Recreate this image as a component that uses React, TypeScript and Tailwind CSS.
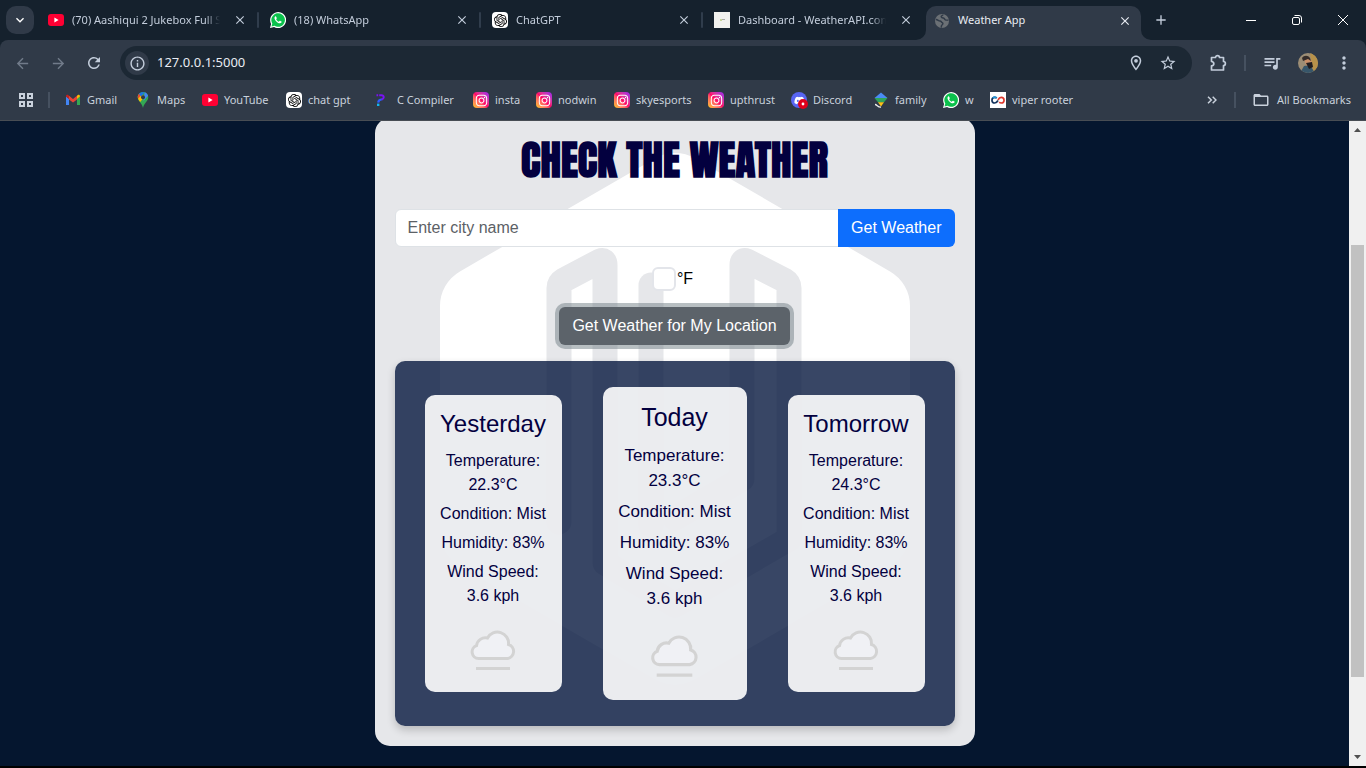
import React from "react";
import { FaInstagram, FaDiscord } from "react-icons/fa";
import { SiOpenai } from "react-icons/si";
import {
  MdArrowBack, MdArrowForward, MdRefresh, MdInfoOutline, MdStarBorder,
  MdMoreVert, MdOutlineLocationOn, MdFolderOpen, MdQueueMusic, MdClose, MdAdd, MdExpandMore,
} from "react-icons/md";

function YouTubeIcon() {
  return (
    <svg viewBox="0 0 16 16" className="size-4 shrink-0" aria-hidden="true">
      <rect y="2" width="16" height="12" rx="3" fill="#ff0033" />
      <path d="M6.4 5.6v4.8L10.6 8z" fill="#fff" />
    </svg>
  );
}

function WhatsAppIcon() {
  return (
    <svg viewBox="0 0 16 16" className="size-4 shrink-0" aria-hidden="true">
      <path d="M0 16l1.1-4.1A8 8 0 1 1 4.1 15z" fill="#fff" />
      <path d="M1.5 14.5l.8-3A6.8 6.8 0 1 1 4.6 13.8z" fill="#0bc14c" />
      <path d="M5.6 4.2c-.3 0-1.1.6-1.1 1.7 0 2.4 3.2 5.4 5.4 5.4 1.1 0 1.8-.9 1.8-1.5 0-.4-1.6-1.1-1.9-1.1s-.7 1-1.1 1c-.5 0-2.5-1.8-2.5-2.3 0-.3.6-.7.6-1.1 0-.4-.7-2.1-1.2-2.1z" fill="#fff" />
    </svg>
  );
}

function ChatIcon() {
  return (
    <span className="grid size-4 shrink-0 place-items-center rounded-sm bg-white text-black">
      <SiOpenai size={13} />
    </span>
  );
}

function DashboardIcon() {
  return (
    <svg viewBox="0 0 16 16" className="size-4 shrink-0" aria-hidden="true">
      <rect width="16" height="16" fill="#f1f1ee" />
      <path d="M6 7h2v2H6z" fill="#c6d39a" />
      <path d="M8 7h3v1H8z" fill="#a9a9a9" />
    </svg>
  );
}

function GlobeIcon() {
  return (
    <svg viewBox="0 0 16 16" className="size-4 shrink-0" aria-hidden="true">
      <circle cx="8" cy="8" r="7" fill="#6b7075" />
      <path d="M2 6.5c2 .2 2.4 1.5 4 1.5 1.3 0 1.2 1.2 2.3 1.6 1 .4.6 1.8-.3 2.4-.8.6-.8 1.8-.4 2.6M9 1.600c-.2 1.200-1.800 1-1.800 2.200 0 1 1.300 1 2.300 1.200 1.200.3.800 1.800 2.200 1.900 1 0 1.500.2 2.700.4" fill="none" stroke="#303a48" strokeWidth="1.5" />
    </svg>
  );
}

function GmailIcon() {
  return (
    <svg viewBox="0 0 16 16" className="size-4 shrink-0" aria-hidden="true">
      <path d="M1 4.5V13h3V6.8z" fill="#4285f4" />
      <path d="M15 4.5V13h-3V6.8z" fill="#34a853" />
      <path d="M12 6.9l3-2.300v-.4c0-1.200-1.300-1.800-2.200-1.100L12 3.700z" fill="#fbbc04" />
      <path d="M4 3.7L8 6.900l4-3.200v3.700L8 10.500 4 7.400z" fill="#ea4335" />
      <path d="M1 4.6L4 6.900V3.700l-.8-.6C2.300 2.400 1 3 1 4.200z" fill="#c5221f" />
    </svg>
  );
}

function MapsIcon() {
  return (
    <svg viewBox="0 0 16 16" className="size-4 shrink-0" aria-hidden="true">
      <path d="M8 0C5 0 2.700 2.300 2.700 5.200c0 4 4 5 5.300 10.800C9.300 10.200 13.300 9.200 13.300 5.200 13.300 2.300 11 0 8 0z" fill="#34a853" />
      <path d="M3 3.5C2.200 6.600 4 8.400 5.200 9.900L9.600 4.500 4.800 1.200z" fill="#fbbc04" />
      <path d="M4 1.8A5.300 5.300 0 0 0 3 6.800l4-4.700z" fill="#ea4335" />
      <path d="M4 1.8C5.500 0 8 0 9.600.3L6 4.700z" fill="#1a73e8" />
      <path d="M9.600.3c2 .6 3 2 3.500 3.500L8.500 9z" fill="#4285f4" />
      <circle cx="8" cy="5.2" r="2" fill="#303a48" />
    </svg>
  );
}

function CompilerIcon() {
  return (
    <svg viewBox="0 0 16 16" className="size-4 shrink-0" fill="none" aria-hidden="true">
      <path d="M1.500 3.200h1.700M4.200 3.200h2.600a1.900 1.900 0 0 1 1.300 3.300L6.600 7.700" stroke="#7a12f5" strokeWidth="2" />
      <path d="M6.800 7.500C4.500 7.600 3.400 8.600 3.200 10.600" stroke="#2f5bff" strokeWidth="2.200" />
      <path d="M2 11.600h2.400V14H2z" fill="#12b5f0" />
    </svg>
  );
}

function InstagramIcon() {
  return (
    <span className="grid size-4 shrink-0 place-items-center rounded-sm bg-linear-to-tr from-[#ffc800] via-[#ff0069] via-50% to-[#9b0cf5] text-white">
      <FaInstagram size={13} />
    </span>
  );
}

function DiscordIcon() {
  return (
    <span className="relative grid size-4 shrink-0 place-items-center rounded-full bg-[#5865f2] text-white">
      <FaDiscord size={11} />
      <svg viewBox="0 0 10 10" className="absolute -right-px -bottom-px size-[10px]" aria-hidden="true">
        <circle cx="5" cy="5" r="5" fill="#e0001b" />
        <circle cx="5" cy="5" r="1.4" fill="#fff" />
      </svg>
    </span>
  );
}

function FamilyIcon() {
  return (
    <svg viewBox="0 0 16 16" className="size-4 shrink-0" aria-hidden="true">
      <path d="M8 .5L14.500 6H1.500z" fill="#4a8af4" />
      <path d="M1.500 6h13L11 10.200H5z" fill="#2fa45a" />
      <path d="M5 10.200h6L8 14.500z" fill="#fbc117" />
      <path d="M2 12.500c2 0 3 3 6 2.500" fill="none" stroke="#eee" strokeWidth="1.3" />
    </svg>
  );
}

function ViperIcon() {
  return (
    <svg viewBox="0 0 16 16" className="size-4 shrink-0" aria-hidden="true">
      <rect width="16" height="16" fill="#fff" />
      <path d="M8 8.500C6.800 10.500 5.800 11 4.800 11a2.800 2.800 0 0 1 0-5.700c.8 0 1.500.3 2 .8" fill="none" stroke="#16365f" strokeWidth="1.7" />
      <path d="M2.800 6a2.800 2.800 0 0 1 3.700-.2" fill="none" stroke="#2196d8" strokeWidth="1.7" />
      <path d="M8 8c1-2 2-2.700 3.200-2.700a2.800 2.800 0 0 1 0 5.700c-.8 0-1.500-.3-2-.8" fill="none" stroke="#e03a2f" strokeWidth="1.7" />
    </svg>
  );
}

function ExtensionIcon() {
  return (
    <svg viewBox="0 0 18 18" className="size-[18px]" fill="none" stroke="currentColor" strokeWidth="1.7" strokeLinejoin="round" aria-hidden="true">
      <path d="M2.500 3.500H6.500C6.500 1 10.500 1 10.500 3.500H14.500V7.500C17 7.500 17 11.500 14.500 11.500V16H2.500V11.900C5.600 11.500 5.600 7.900 2.500 7.500z" />
    </svg>
  );
}

const tabs = [
  { title: "(70) Aashiqui 2 Jukebox Full S", icon: <YouTubeIcon /> },
  { title: "(18) WhatsApp", icon: <WhatsAppIcon /> },
  { title: "ChatGPT", icon: <ChatIcon /> },
  { title: "Dashboard - WeatherAPI.com", icon: <DashboardIcon /> },
];

const bookmarks = [
  { label: "Gmail", icon: <GmailIcon />, width: "w-[70px]" },
  { label: "Maps", icon: <MapsIcon />, width: "w-[67px]" },
  { label: "YouTube", icon: <YouTubeIcon />, width: "w-[84px]" },
  { label: "chat gpt", icon: <ChatIcon />, width: "w-[89px]" },
  { label: "C Compiler", icon: <CompilerIcon />, width: "w-[98px]" },
  { label: "insta", icon: <InstagramIcon />, width: "w-[63px]" },
  { label: "nodwin", icon: <InstagramIcon />, width: "w-[78px]" },
  { label: "skyesports", icon: <InstagramIcon />, width: "w-[94px]" },
  { label: "upthrust", icon: <InstagramIcon />, width: "w-[83px]" },
  { label: "Discord", icon: <DiscordIcon />, width: "w-[82px]" },
  { label: "family", icon: <FamilyIcon />, width: "w-[70px]" },
  { label: "w", icon: <WhatsAppIcon />, width: "w-[47px]" },
  { label: "viper rooter", icon: <ViperIcon />, width: "w-[90px]" },
];

function TabStrip() {
  return (
    <div className="flex h-10 items-center bg-[#15212d] pl-1.5">
      <button aria-label="Search tabs" className="mr-1 grid size-7 shrink-0 place-items-center rounded-[10px] bg-[#303a48] text-white">
        <MdExpandMore size={16} />
      </button>
      {tabs.map((tab, i) => (
        <div key={tab.title} className="flex h-7 w-[222px] min-w-0 items-center pl-2.5 text-[#c3cddb]">
          {tab.icon}
          <span className="ml-2 w-[148px] overflow-hidden mask-r-from-90% whitespace-nowrap">{tab.title}</span>
          <button aria-label={`Close ${tab.title}`} className="ml-3 grid size-4 shrink-0 place-items-center">
            <MdClose size={14} />
          </button>
          {i < tabs.length - 1 && <span className="ml-auto mr-px h-4 w-0.5 rounded bg-[#303d4c]" />}
        </div>
      ))}
      <div className="relative flex h-[34px] w-[215px] items-center self-end rounded-t-[10px] bg-[#303a48] pb-[5px] pl-2 text-[#e8ecf2]">
        <GlobeIcon />
        <span className="ml-2 flex-1 whitespace-nowrap">Weather App</span>
        <button aria-label="Close Weather App" className="mr-2 grid size-4 place-items-center">
          <MdClose size={14} />
        </button>
        <svg viewBox="0 0 10 10" className="absolute bottom-0 -left-2.5 size-2.5" aria-hidden="true">
          <path d="M10 0v10H0A10 10 0 0 0 10 0z" fill="#303a48" />
        </svg>
        <svg viewBox="0 0 10 10" className="absolute -right-2.5 bottom-0 size-2.5" aria-hidden="true">
          <path d="M0 0v10h10A10 10 0 0 1 0 0z" fill="#303a48" />
        </svg>
      </div>
      <button aria-label="New tab" className="ml-[11px] grid size-[18px] place-items-center text-[#c3cddb]">
        <MdAdd size={16} />
      </button>
      <div className="ml-auto flex text-white">
        <button aria-label="Minimize" className="grid h-10 w-[46px] place-items-center">
          <svg viewBox="0 0 10 10" className="size-2.5" aria-hidden="true"><path d="M0 5.500h10" stroke="currentColor" /></svg>
        </button>
        <button aria-label="Restore" className="grid h-10 w-[46px] place-items-center">
          <svg viewBox="0 0 10 10" className="size-2.5" fill="none" stroke="currentColor" aria-hidden="true">
            <rect x=".5" y="2.500" width="7" height="7" rx="1.500" />
            <path d="M2.500.5H7A2.500 2.500 0 0 1 9.500 3v4.500" />
          </svg>
        </button>
        <button aria-label="Close window" className="grid h-10 w-[46px] place-items-center">
          <svg viewBox="0 0 10 10" className="size-2.5" aria-hidden="true"><path d="M0 0l10 10M10 0L0 10" stroke="currentColor" /></svg>
        </button>
      </div>
    </div>
  );
}

function Toolbar() {
  return (
    <div className="flex h-[46px] items-center rounded-t-lg bg-[#303a48] pl-1 text-[#c3cddb]">
      <button aria-label="Back" className="grid w-9 place-items-center text-[#717b8a]"><MdArrowBack size={17} /></button>
      <button aria-label="Forward" className="grid w-9 place-items-center text-[#717b8a]"><MdArrowForward size={17} /></button>
      <button aria-label="Reload" className="grid w-9 place-items-center"><MdRefresh size={18} /></button>
      <div className="ml-2 flex h-[34px] flex-1 items-center rounded-full bg-[#1c2834] pr-2 pl-[5px]">
        <button aria-label="Site information" className="grid size-6 place-items-center rounded-full bg-[#303a48]">
          <MdInfoOutline size={17} />
        </button>
        <input aria-label="Address" defaultValue="127.0.0.1:5000" className="ml-2 min-w-0 flex-1 bg-transparent text-[13px] text-[#e8ecf2] outline-none" />
        <button aria-label="Location access" className="grid w-8 place-items-center"><MdOutlineLocationOn size={18} /></button>
        <button aria-label="Bookmark this page" className="grid w-8 place-items-center"><MdStarBorder size={18} /></button>
      </div>
      <button aria-label="Extensions" className="ml-2 grid w-9 place-items-center"><ExtensionIcon /></button>
      <span className="ml-2 h-4 w-0.5 bg-[#465160]" />
      <button aria-label="Media controls" className="ml-2 grid w-9 place-items-center"><MdQueueMusic size={20} /></button>
      <button aria-label="Profile" className="grid w-9 place-items-center">
        <svg viewBox="0 0 20 20" className="size-5 overflow-hidden rounded-full" aria-hidden="true">
          <rect width="20" height="20" fill="#9c8d75" />
          <path d="M12 0h8v20h-5z" fill="#b8924a" />
          <path d="M2 20l4-7 6-1 5 8z" fill="#37566a" />
          <path d="M6 6l5-2 3 5-2 5-4-2z" fill="#c98f68" />
          <path d="M4 5c2-3 6-3 8 0l1 3-3-2-5 2z" fill="#352c29" />
          <path d="M8 10l6-1 1 5-4 2z" fill="#201d20" />
        </svg>
      </button>
      <button aria-label="Menu" className="mr-1 grid w-9 place-items-center"><MdMoreVert size={20} /></button>
    </div>
  );
}

function BookmarksBar() {
  return (
    <nav aria-label="Bookmarks" className="flex h-[35px] items-center border-b border-[#484d54] bg-[#303a48] pr-[15px] pb-[6px] pl-[19px] text-[#c9d1dc]">
      <button aria-label="Apps" className="grid w-3.5 place-items-center">
        <svg viewBox="0 0 14 14" className="size-3.5" fill="none" stroke="currentColor" strokeWidth="2" aria-hidden="true">
          <path d="M1 1h4v4H1zM9 1h4v4H9zM1 9h4v4H1zM9 9h4v4H9z" />
        </svg>
      </button>
      <span className="mx-[15px] h-4 w-0.5 bg-[#465160]" />
      {bookmarks.map((b) => (
        <a key={b.label} href="#" className={`flex shrink-0 items-center gap-1.5 whitespace-nowrap ${b.width}`}>
          {b.icon}
          {b.label}
        </a>
      ))}
      <button aria-label="More bookmarks" className="ml-auto">
        <svg viewBox="0 0 10 8" className="h-2 w-2.5" fill="none" stroke="currentColor" strokeWidth="1.500" aria-hidden="true">
          <path d="M1 .7L4.300 4 1 7.300M5.700.7L9 4 5.700 7.300" />
        </svg>
      </button>
      <span className="mr-4 ml-[17px] h-4 w-0.5 bg-[#465160]" />
      <a href="#" className="flex items-center gap-[7px] whitespace-nowrap">
        <MdFolderOpen size={18} />
        All Bookmarks
      </a>
    </nav>
  );
}

function HexagonMark() {
  return (
    <svg viewBox="0 0 470 544" className="absolute inset-x-0 top-[29px] mx-auto w-[470px]" fill="none" strokeLinejoin="round" strokeLinecap="round" aria-hidden="true">
      <path d="M235 46L430 159v226L235 498 40 385V159z" fill="#fff" stroke="#fff" strokeWidth="80" />
      <g stroke="#e6e7ea" strokeWidth="25">
        <path d="M119 375V141q0-5 5-8l36-19q5-2 5 4v298l70 42 114-66V141q0-5-5-8l-37-19q-5-2-5 4v214l-67 39" />
        <path d="M211 138v240" />
      </g>
    </svg>
  );
}

function MistIcon({ className }: { className: string }) {
  return (
    <svg viewBox="0 0 64 64" className={`mx-auto block ${className}`} fill="#f0f1f5" stroke="#d3d3d3" strokeWidth="3" aria-hidden="true">
      <path d="M17.500 45.500A6.600 6.600 0 0 1 15.500 32.700A9 9 0 0 1 26.500 25A11.200 11.200 0 0 1 47.500 31.500A7.200 7.200 0 0 1 46.500 45.500z" />
      <path d="M15 55.500h34" />
    </svg>
  );
}

type Day = { name: string; temperature: string; condition: string; humidity: string; wind: string };

const days: Day[] = [
  { name: "Yesterday", temperature: "22.3°C", condition: "Mist", humidity: "83%", wind: "3.6 kph" },
  { name: "Today", temperature: "23.3°C", condition: "Mist", humidity: "83%", wind: "3.6 kph" },
  { name: "Tomorrow", temperature: "24.3°C", condition: "Mist", humidity: "83%", wind: "3.6 kph" },
];

function DayCard({ day, featured }: { day: Day; featured: boolean }) {
  const card = featured
    ? "w-36 gap-1.5 pt-[15px] pb-4 text-[17px] leading-[25px]"
    : "w-[137px] gap-[5px] pt-3.5 pb-[15px] text-base leading-6";
  return (
    <article className={`flex flex-col rounded-[10px] bg-white/90 px-3 text-center ${card}`}>
      <h3 className={featured ? "mb-[5px] text-[25px] leading-[30px]" : "mb-[6px] text-2xl leading-[29px]"}>{day.name}</h3>
      <p>Temperature: <br />{day.temperature}</p>
      <p className="whitespace-nowrap">Condition: {day.condition}</p>
      <p className="whitespace-nowrap">Humidity: {day.humidity}</p>
      <p>Wind Speed: <br />{day.wind}</p>
      <MistIcon className={featured ? "size-[67px]" : "size-16"} />
    </article>
  );
}

function WeatherPage() {
  return (
    <main className="flex-1 overflow-hidden bg-[#05162f] font-['Liberation_Sans',Arial,sans-serif] text-base">
      <section className="relative mx-auto -mt-[3px] mb-5 w-full max-w-[600px] rounded-[15px] bg-[#e6e7ea] p-5 text-[#03003f]">
        <HexagonMark />
        <div className="relative flex flex-col items-center">
          <h1 className="mb-[27px] font-[Impact,Anton,'Roboto_Condensed',sans-serif] text-[41px] leading-[44px] font-bold">CHECK THE WEATHER</h1>
          <form className="flex w-full" onSubmit={(e) => e.preventDefault()}>
            <input aria-label="City name" placeholder="Enter city name" className="h-[38px] min-w-0 flex-1 rounded-l-md border border-[#dee2e6] bg-white px-3 text-[#212529] placeholder:text-[#5c6166]" />
            <button type="submit" className="-ml-px rounded-r-md bg-[#0d6efd] px-[13px] text-white">Get Weather</button>
          </form>
          <label className="mt-5 flex h-6 items-center gap-px pr-1 text-black">
            <input type="checkbox" className="size-6 appearance-none rounded-md border-2 border-[#e3e5ea] bg-white" />
            °F
          </label>
          <button className="mt-4 h-[38px] rounded-md bg-[#5c636a] px-[13px] text-white ring-4 ring-[#717f86]/50">Get Weather for My Location</button>
          <div className="mt-4 flex w-full items-center justify-between rounded-[10px] bg-[#06183e]/80 px-[30px] py-[26px] shadow-[0_4px_8px_rgba(0,0,0,0.2)]">
            {days.map((day) => (
              <DayCard key={day.name} day={day} featured={day.name === "Today"} />
            ))}
          </div>
        </div>
      </section>
    </main>
  );
}

function Scrollbar() {
  return (
    <div className="flex w-[17px] shrink-0 flex-col items-center bg-[#f0f0f0] text-[#505050]" aria-hidden="true">
      <svg viewBox="0 0 17 17" className="size-[17px]"><path d="M5 11h7L8.500 7z" fill="currentColor" /></svg>
      <span className="flex-[107]" />
      <span className="w-[13px] flex-[432] bg-[#c1c1c1]" />
      <span className="flex-[72]" />
      <svg viewBox="0 0 17 17" className="size-[17px]"><path d="M5 6h7l-3.500 4z" fill="currentColor" /></svg>
    </div>
  );
}

export default function App() {
  return (
    <div className="flex min-h-screen flex-col border-b-2 border-black bg-[#05162f] font-['Noto_Sans','Open_Sans',sans-serif] text-[11px]">
      <header className="bg-[#15212d]">
        <TabStrip />
        <Toolbar />
        <BookmarksBar />
      </header>
      <div className="flex flex-1">
        <WeatherPage />
        <Scrollbar />
      </div>
    </div>
  );
}
